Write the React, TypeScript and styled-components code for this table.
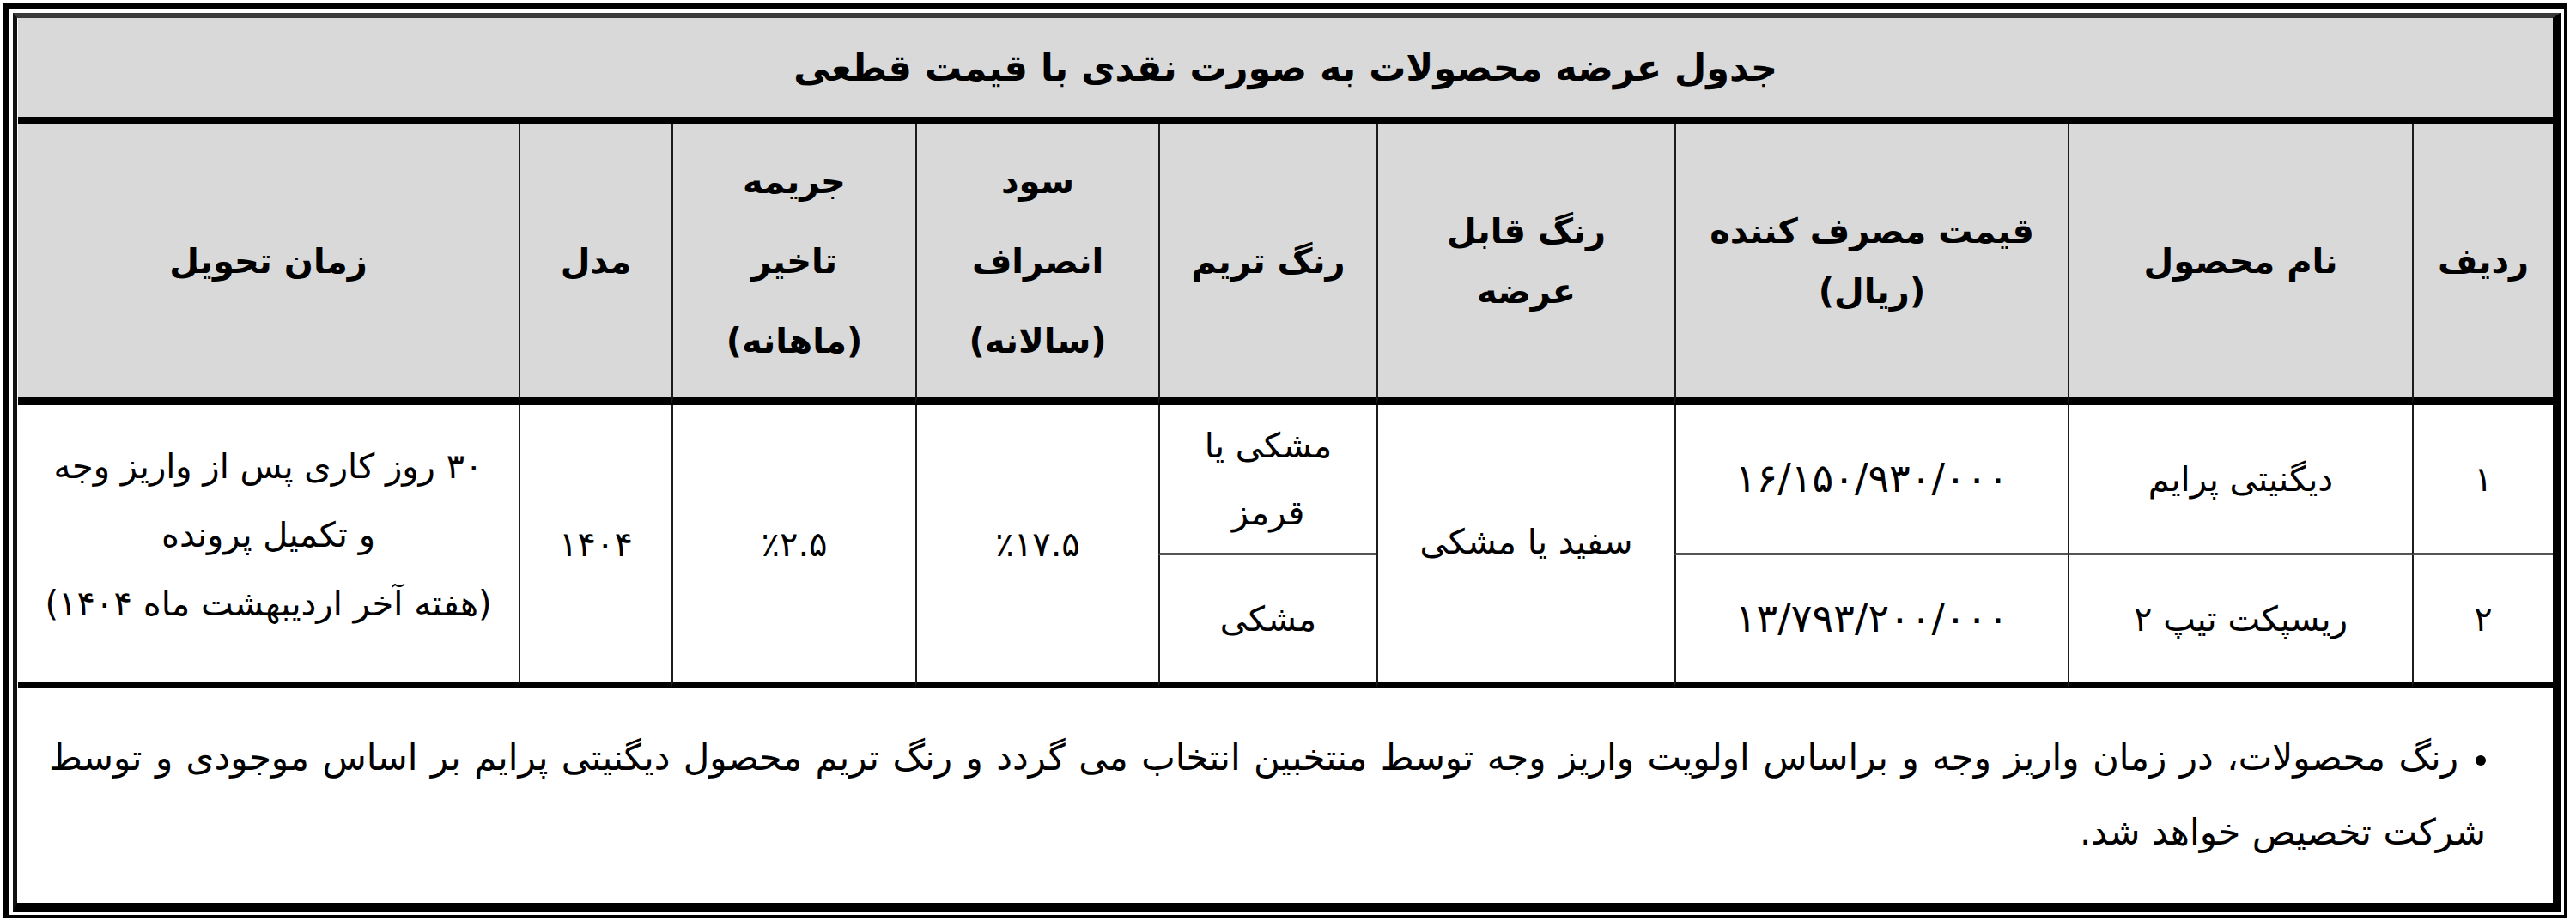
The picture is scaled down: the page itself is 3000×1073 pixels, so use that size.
import React from "react";
import styled, { createGlobalStyle } from "styled-components";

const GlobalStyle = createGlobalStyle`
  html, body { margin: 0; padding: 0; background: #fff; }
  body { font-family: "DejaVu Sans", sans-serif; color: #000; }
  * { box-sizing: border-box; }
`;

const Outer = styled.div`
  margin: 3px 0 0 3px;
  width: 2987px;
  height: 1066px;
  border-style: solid;
  border-color: #000;
  border-width: 8px 4px 3px 8px;
  padding: 4px;
  background: #fff;
`;

const Inner = styled.div`
  height: 100%;
  border-style: solid;
  border-color: #3a3a3a #000 #000 #111;
  border-width: 6px 9px 10px 5px;
`;

const Grid = styled.div`
  direction: rtl;
  display: grid;
  height: 100%;
  grid-template-columns: 164px 401px 458px 347px 254px 283px 284px 178px 583px;
  grid-template-rows: 124px 327px 175px 154px 251px;
`;

const TitleCell = styled.div`
  grid-column: 1 / -1;
  background: #d9d9d9;
  border-bottom: 9px solid #000;
  display: flex;
  align-items: center;
  justify-content: center;
  font-weight: bold;
  font-size: 43px;
`;

type CellProps = {
  $last?: boolean;
  $span?: boolean;
  $bottom?: "thick" | "thin" | "heavy";
  $gap?: number;
  $head?: boolean;
  $lift?: number;
};

const Cell = styled.div<CellProps>`
  grid-row: ${(p) => (p.$span ? "span 2" : "auto")};
  background: ${(p) => (p.$head ? "#d9d9d9" : "#fff")};
  border-left: ${(p) => (p.$last ? "none" : "2px solid #1c1c1c")};
  border-bottom: ${(p) =>
    p.$bottom === "heavy"
      ? "9px solid #000"
      : p.$bottom === "thin"
      ? "3px solid #555"
      : "6px solid #000"};
  padding-bottom: ${(p) => p.$lift ?? 0}px;
  display: flex;
  flex-direction: column;
  align-items: center;
  justify-content: center;
  gap: ${(p) => p.$gap ?? 0}px;
  font-weight: ${(p) => (p.$head ? "bold" : "normal")};
  font-size: 40px;
  line-height: 1.2;
  text-align: center;
`;

const Line = styled.span`
  display: block;
  white-space: nowrap;
`;

const Num = styled.span<{ $size?: number }>`
  direction: ltr;
  unicode-bidi: bidi-override;
  white-space: nowrap;
  font-size: ${(p) => p.$size ?? 40}px;
`;

const Footer = styled.div`
  grid-column: 1 / -1;
  display: flex;
  flex-direction: column;
  justify-content: center;
  gap: 36px;
  padding: 0 78px 0 36px;
  font-size: 42px;
  line-height: 1.2;
`;

const FooterLine = styled.div<{ $full?: boolean }>`
  white-space: nowrap;
  text-align: ${(p) => (p.$full ? "justify" : "right")};
  text-align-last: ${(p) => (p.$full ? "justify" : "right")};
`;

const Bullet = styled.span`
  display: inline-block;
  width: 12px;
  height: 12px;
  border-radius: 50%;
  background: #000;
  margin-left: 20px;
  vertical-align: middle;
`;

const headers: { lines: string[]; gap: number }[] = [
  { lines: ["ردیف"], gap: 0 },
  { lines: ["نام محصول"], gap: 0 },
  { lines: ["قیمت مصرف کننده", "(ریال)"], gap: 22 },
  { lines: ["رنگ قابل", "عرضه"], gap: 22 },
  { lines: ["رنگ تریم"], gap: 0 },
  { lines: ["سود", "انصراف", "(سالانه)"], gap: 45 },
  { lines: ["جریمه", "تاخیر", "(ماهانه)"], gap: 45 },
  { lines: ["مدل"], gap: 0 },
  { lines: ["زمان تحویل"], gap: 0 },
];

export default function App() {
  return (
    <>
      <GlobalStyle />
      <Outer>
        <Inner>
          <Grid>
            <TitleCell>جدول عرضه محصولات به صورت نقدی با قیمت قطعی</TitleCell>

            {headers.map((h, i) => (
              <Cell
                key={i}
                $head
                $bottom="heavy"
                $gap={h.gap}
                $last={i === headers.length - 1}
              >
                {h.lines.map((l, j) => (
                  <Line key={j}>{l}</Line>
                ))}
              </Cell>
            ))}

            <Cell $bottom="thin">۱</Cell>
            <Cell $bottom="thin">دیگنیتی پرایم</Cell>
            <Cell $bottom="thin">
              <Num $size={46}>۱۶/۱۵۰/۹۳۰/۰۰۰</Num>
            </Cell>
            <Cell $span $lift={6}>سفید یا مشکی</Cell>
            <Cell $bottom="thin" $gap={30}>
              <Line>مشکی یا</Line>
              <Line>قرمز</Line>
            </Cell>
            <Cell $span>
              <Num>٪۱۷.۵</Num>
            </Cell>
            <Cell $span>
              <Num>٪۲.۵</Num>
            </Cell>
            <Cell $span>۱۴۰۴</Cell>
            <Cell $span $last $gap={32} $lift={22}>
              <Line>۳۰ روز کاری پس از واریز وجه</Line>
              <Line>و تکمیل پرونده</Line>
              <Line>(هفته آخر اردیبهشت ماه ۱۴۰۴)</Line>
            </Cell>

            <Cell>۲</Cell>
            <Cell>ریسپکت تیپ ۲</Cell>
            <Cell>
              <Num $size={46}>۱۳/۷۹۳/۲۰۰/۰۰۰</Num>
            </Cell>
            <Cell>مشکی</Cell>

            <Footer>
              <FooterLine $full>
                <Bullet />
                رنگ محصولات، در زمان واریز وجه و براساس اولویت واریز وجه توسط
                منتخبین انتخاب می گردد و رنگ تریم محصول دیگنیتی پرایم بر اساس
                موجودی و توسط
              </FooterLine>
              <FooterLine>شرکت تخصیص خواهد شد.</FooterLine>
            </Footer>
          </Grid>
        </Inner>
      </Outer>
    </>
  );
}
